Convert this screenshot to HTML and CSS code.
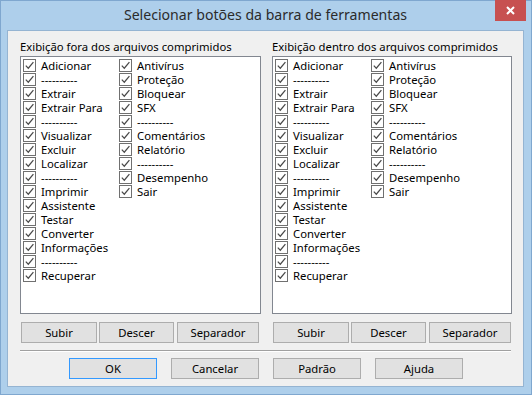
FILE: index.html
```html
<!DOCTYPE html>
<html lang="pt">
<head>
<meta charset="utf-8">
<title>Selecionar botões da barra de ferramentas</title>
<link rel="stylesheet" href="styles.css">
</head>
<body>
<svg class="defs" width="0" height="0" aria-hidden="true">
  <symbol id="chk" viewBox="0 0 13 13">
    <rect x="0.5" y="0.5" width="12" height="12" fill="#fff" stroke="#707070"/>
    <path d="M2.8 6.6 L5.3 9.2 L10.4 3.2" fill="none" stroke="#4a4a4a" stroke-width="1.25"/>
  </symbol>
</svg>
<div class="window">
  <div class="titlebar">
    <div class="title">Selecionar botões da barra de ferramentas</div>
    <div class="close">
      <svg width="9" height="9" viewBox="0 0 9 9"><path d="M1 1 L8 8 M8 1 L1 8" stroke="#fff" stroke-width="2"/></svg>
    </div>
  </div>
  <div class="content">
    <div class="groups">
      <div class="group">
        <div class="label">Exibição fora dos arquivos comprimidos</div>
        <div class="listbox">
          <div class="col">
            <div class="item"><svg class="cb"><use href="#chk"/></svg><span>Adicionar</span></div>
            <div class="item"><svg class="cb"><use href="#chk"/></svg><span>----------</span></div>
            <div class="item"><svg class="cb"><use href="#chk"/></svg><span>Extrair</span></div>
            <div class="item"><svg class="cb"><use href="#chk"/></svg><span>Extrair Para</span></div>
            <div class="item"><svg class="cb"><use href="#chk"/></svg><span>----------</span></div>
            <div class="item"><svg class="cb"><use href="#chk"/></svg><span>Visualizar</span></div>
            <div class="item"><svg class="cb"><use href="#chk"/></svg><span>Excluir</span></div>
            <div class="item"><svg class="cb"><use href="#chk"/></svg><span>Localizar</span></div>
            <div class="item"><svg class="cb"><use href="#chk"/></svg><span>----------</span></div>
            <div class="item"><svg class="cb"><use href="#chk"/></svg><span>Imprimir</span></div>
            <div class="item"><svg class="cb"><use href="#chk"/></svg><span>Assistente</span></div>
            <div class="item"><svg class="cb"><use href="#chk"/></svg><span>Testar</span></div>
            <div class="item"><svg class="cb"><use href="#chk"/></svg><span>Converter</span></div>
            <div class="item"><svg class="cb"><use href="#chk"/></svg><span>Informações</span></div>
            <div class="item"><svg class="cb"><use href="#chk"/></svg><span>----------</span></div>
            <div class="item"><svg class="cb"><use href="#chk"/></svg><span>Recuperar</span></div>
          </div>
          <div class="col">
            <div class="item"><svg class="cb"><use href="#chk"/></svg><span>Antivírus</span></div>
            <div class="item"><svg class="cb"><use href="#chk"/></svg><span>Proteção</span></div>
            <div class="item"><svg class="cb"><use href="#chk"/></svg><span>Bloquear</span></div>
            <div class="item"><svg class="cb"><use href="#chk"/></svg><span>SFX</span></div>
            <div class="item"><svg class="cb"><use href="#chk"/></svg><span>----------</span></div>
            <div class="item"><svg class="cb"><use href="#chk"/></svg><span>Comentários</span></div>
            <div class="item"><svg class="cb"><use href="#chk"/></svg><span>Relatório</span></div>
            <div class="item"><svg class="cb"><use href="#chk"/></svg><span>----------</span></div>
            <div class="item"><svg class="cb"><use href="#chk"/></svg><span>Desempenho</span></div>
            <div class="item"><svg class="cb"><use href="#chk"/></svg><span>Sair</span></div>
          </div>
        </div>
        <div class="btnrow">
          <button class="btn b-sub">Subir</button>
          <button class="btn b-desc">Descer</button>
          <button class="btn b-sep">Separador</button>
        </div>
      </div>
      <div class="group group-right">
        <div class="label">Exibição dentro dos arquivos comprimidos</div>
        <div class="listbox">
          <div class="col">
            <div class="item"><svg class="cb"><use href="#chk"/></svg><span>Adicionar</span></div>
            <div class="item"><svg class="cb"><use href="#chk"/></svg><span>----------</span></div>
            <div class="item"><svg class="cb"><use href="#chk"/></svg><span>Extrair</span></div>
            <div class="item"><svg class="cb"><use href="#chk"/></svg><span>Extrair Para</span></div>
            <div class="item"><svg class="cb"><use href="#chk"/></svg><span>----------</span></div>
            <div class="item"><svg class="cb"><use href="#chk"/></svg><span>Visualizar</span></div>
            <div class="item"><svg class="cb"><use href="#chk"/></svg><span>Excluir</span></div>
            <div class="item"><svg class="cb"><use href="#chk"/></svg><span>Localizar</span></div>
            <div class="item"><svg class="cb"><use href="#chk"/></svg><span>----------</span></div>
            <div class="item"><svg class="cb"><use href="#chk"/></svg><span>Imprimir</span></div>
            <div class="item"><svg class="cb"><use href="#chk"/></svg><span>Assistente</span></div>
            <div class="item"><svg class="cb"><use href="#chk"/></svg><span>Testar</span></div>
            <div class="item"><svg class="cb"><use href="#chk"/></svg><span>Converter</span></div>
            <div class="item"><svg class="cb"><use href="#chk"/></svg><span>Informações</span></div>
            <div class="item"><svg class="cb"><use href="#chk"/></svg><span>----------</span></div>
            <div class="item"><svg class="cb"><use href="#chk"/></svg><span>Recuperar</span></div>
          </div>
          <div class="col">
            <div class="item"><svg class="cb"><use href="#chk"/></svg><span>Antivírus</span></div>
            <div class="item"><svg class="cb"><use href="#chk"/></svg><span>Proteção</span></div>
            <div class="item"><svg class="cb"><use href="#chk"/></svg><span>Bloquear</span></div>
            <div class="item"><svg class="cb"><use href="#chk"/></svg><span>SFX</span></div>
            <div class="item"><svg class="cb"><use href="#chk"/></svg><span>----------</span></div>
            <div class="item"><svg class="cb"><use href="#chk"/></svg><span>Comentários</span></div>
            <div class="item"><svg class="cb"><use href="#chk"/></svg><span>Relatório</span></div>
            <div class="item"><svg class="cb"><use href="#chk"/></svg><span>----------</span></div>
            <div class="item"><svg class="cb"><use href="#chk"/></svg><span>Desempenho</span></div>
            <div class="item"><svg class="cb"><use href="#chk"/></svg><span>Sair</span></div>
          </div>
        </div>
        <div class="btnrow">
          <button class="btn b-sub">Subir</button>
          <button class="btn b-desc">Descer</button>
          <button class="btn b-sep">Separador</button>
        </div>
      </div>
    </div>
    <div class="separator"></div>
    <div class="footer">
      <button class="btn b-foot b-default">OK</button>
      <button class="btn b-foot">Cancelar</button>
      <button class="btn b-foot">Padrão</button>
      <button class="btn b-foot">Ajuda</button>
    </div>
  </div>
</div>
</body>
</html>
```

FILE: styles.css
```css
html, body {
  margin: 0;
  padding: 0;
  width: 532px;
  height: 395px;
  overflow: hidden;
}

.defs {
  position: absolute;
  width: 0;
  height: 0;
}

.window {
  box-sizing: border-box;
  width: 532px;
  height: 395px;
  background: #aecfeb;
  border: 1px solid #7fa7cf;
  padding: 0 7px 7px 6px;
  display: flex;
  flex-direction: column;
  font-family: "Segoe UI", "Noto Sans", "Liberation Sans", sans-serif;
  font-size: 11.3px;
  color: #000;
}

.titlebar {
  position: relative;
  height: 29px;
  flex: none;
}

.title {
  text-align: center;
  font-size: 14.1px;
  line-height: 28px;
  color: #2b2b2b;
}

.close {
  position: absolute;
  top: -1px;
  right: -2px;
  width: 31px;
  height: 21px;
  background: #c75050;
  display: flex;
  align-items: center;
  justify-content: center;
}

.content {
  flex: 1;
  box-sizing: border-box;
  background: #f0f0f0;
  border: 1px solid #95b4d2;
  padding: 8px 11px 0 12px;
  display: flex;
  flex-direction: column;
}

.groups {
  display: flex;
  gap: 11px;
}

.group {
  width: 241px;
  display: flex;
  flex-direction: column;
}

.group-right {
  width: 240px;
}

.label {
  height: 15px;
  line-height: 15px;
  margin-bottom: 2px;
  white-space: nowrap;
}

.listbox {
  box-sizing: border-box;
  height: 258px;
  background: #fff;
  border: 1px solid #828790;
  padding: 1px 0 0 2px;
  display: flex;
}

.col {
  width: 96px;
  display: flex;
  flex-direction: column;
}

.item {
  height: 14px;
  display: flex;
  align-items: center;
  white-space: nowrap;
  line-height: 13px;
}

.item span {
  line-height: 13px;
}

.cb {
  width: 13px;
  height: 13px;
  flex: none;
  margin-right: 5px;
  margin-top: 1px;
}

.btnrow {
  display: flex;
  margin-top: 8px;
  padding-left: 1px;
}

.btn {
  box-sizing: border-box;
  height: 21px;
  padding: 0;
  background: #e1e1e1;
  border: 1px solid #adadad;
  font-family: inherit;
  font-size: 11.3px;
  color: #000;
  line-height: 19px;
}

.b-sub {
  width: 76px;
}

.b-desc {
  width: 75px;
  margin-left: 2px;
}

.b-sep {
  width: 82px;
  margin-left: 3px;
}

.separator {
  margin-top: 7px;
  width: 491px;
  border-top: 1px solid #a0a0a0;
  border-bottom: 1px solid #fff;
}

.footer {
  display: flex;
  gap: 14px;
  margin-top: 6px;
  padding-left: 49px;
}

.b-foot {
  width: 88px;
}

.b-default {
  border-color: #3399ff;
}
```
